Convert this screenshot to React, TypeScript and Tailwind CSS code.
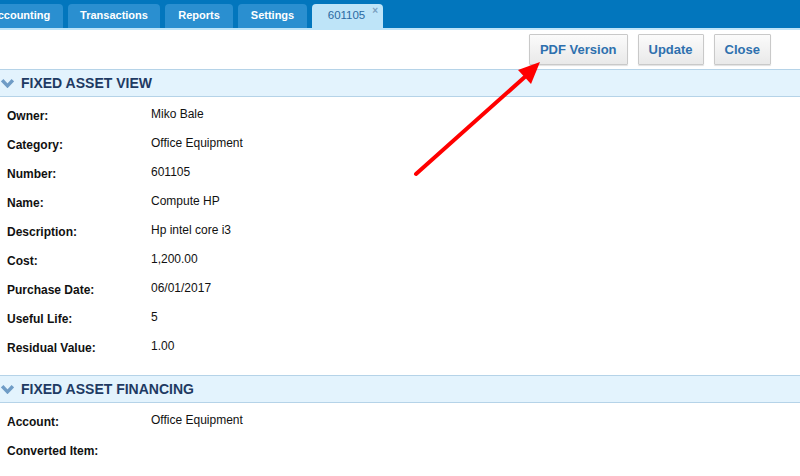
import React from "react";

const tabs = [
  { label: "Accounting", w: "w-[86px]", ml: "ml-[-23px]" },
  { label: "Transactions", w: "w-[92px]", ml: "ml-[5px]" },
  { label: "Reports", w: "w-[68px]", ml: "ml-[5px]" },
  { label: "Settings", w: "w-[69px]", ml: "ml-[5px]" },
];

const viewRows = [
  ["Owner:", "Miko Bale"],
  ["Category:", "Office Equipment"],
  ["Number:", "601105"],
  ["Name:", "Compute HP"],
  ["Description:", "Hp intel core i3"],
  ["Cost:", "1,200.00"],
  ["Purchase Date:", "06/01/2017"],
  ["Useful Life:", "5"],
  ["Residual Value:", "1.00"],
];

const financingRows = [
  ["Account:", "Office Equipment"],
  ["Converted Item:", ""],
];

function Chevron() {
  return (
    <svg width="13" height="9" viewBox="0 0 13 9" className="shrink-0">
      <path d="M1.2 1.2 L6.5 6.8 L11.8 1.2" fill="none" stroke="#6f9cc6" strokeWidth="3.4" />
    </svg>
  );
}

function SectionHeader({ title }: { title: string }) {
  return (
    <div className="flex h-[28px] items-center gap-[7px] border-y border-[#b5d3e8] bg-[#e3f3fd] pl-[1px]">
      <Chevron />
      <span className="text-[14px] font-bold uppercase text-[#1e3a63]">{title}</span>
    </div>
  );
}

function Row({ label, value }: { label: string; value: string }) {
  return (
    <div className="flex h-[29px] items-center pl-[7px] text-[12px] text-[#111]">
      <span className="w-[144px] font-bold">{label}</span>
      <span className="mb-[4px]">{value}</span>
    </div>
  );
}

function Btn({ children }: { children: React.ReactNode }) {
  return (
    <button className="h-[31px] rounded-[1px] border border-[#c9c9c9] bg-gradient-to-b from-[#fbfbfb] to-[#e9e9e9] px-[10px] text-[13px] font-bold text-[#2e70ae] shadow-[0_1px_1px_rgba(0,0,0,0.12)]">
      {children}
    </button>
  );
}

export default function App() {
  return (
    <div className="relative h-[476px] w-[800px] overflow-hidden bg-white font-['Liberation_Sans',Arial,sans-serif]">
      {/* tab bar */}
      <div className="flex h-[28px] items-end bg-[#0276bd]">
        {tabs.map((t) => (
          <div
            key={t.label}
            className={`${t.w} ${t.ml} flex h-[24px] shrink-0 items-center justify-center rounded-t-[4px] bg-[#2a8fd0] pb-[1px] text-[11px] font-bold text-white`}
          >
            {t.label}
          </div>
        ))}
        <div className="relative ml-[5px] flex h-[26px] w-[71px] shrink-0 translate-y-[2px] items-center justify-center rounded-t-[4px] bg-[#bee4f8] pb-[3px] pr-[2px] text-[11.5px] text-[#2a6aa3]">
          601105
          <span className="absolute right-[5px] top-[2px] text-[10px] font-bold leading-none text-[#7a9fbf]">×</span>
        </div>
      </div>
      <div className="h-[2px] bg-[#bee4f8]" />

      {/* toolbar */}
      <div className="flex h-[39px] items-start justify-end gap-[10px] pr-[29px] pt-[4px]">
        <Btn>PDF Version</Btn>
        <Btn>Update</Btn>
        <Btn>Close</Btn>
      </div>

      <SectionHeader title="Fixed Asset View" />
      <div className="pt-[4px]">
        {viewRows.map(([l, v]) => (
          <Row key={l} label={l} value={v} />
        ))}
      </div>

      <div className="mt-[13px]">
        <SectionHeader title="Fixed Asset Financing" />
        <div className="pt-[4px]">
          {financingRows.map(([l, v]) => (
            <Row key={l} label={l} value={v} />
          ))}
        </div>
      </div>

      {/* red arrow annotation */}
      <svg className="pointer-events-none absolute left-0 top-0" width="800" height="476">
        <line x1="416" y1="174" x2="527" y2="75" stroke="#ff0000" strokeWidth="4" strokeLinecap="round" />
        <polygon points="540,62 518,70 531,84" fill="#ff0000" />
      </svg>
    </div>
  );
}
